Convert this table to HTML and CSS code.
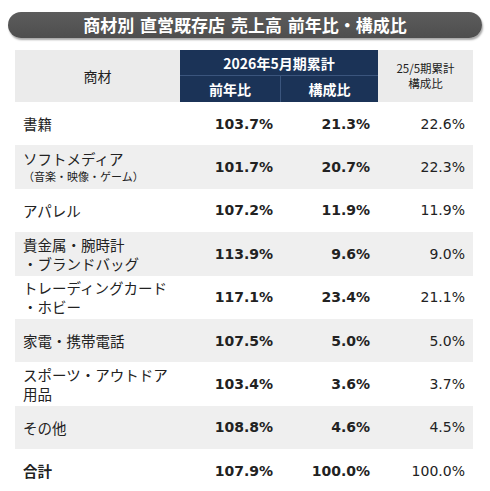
FILE: index.html
```html
<!DOCTYPE html>
<html lang="ja">
<head>
    <meta charset="UTF-8">
    <meta name="viewport" content="width=device-width, initial-scale=1.0">
    <title>商材別 直営既存店 売上高</title>
    <link rel="stylesheet" href="styles.css">
</head>
<body>
    <div class="page">
        <div class="title-bar">商材別 直営既存店 売上高 前年比・構成比</div>

        <div class="sheet">
            <!-- ヘッダー -->
            <div class="head">
                <div class="h-item">商材</div>
                <div class="h-period">2026年5月期累計</div>
                <div class="h-yoy">前年比</div>
                <div class="h-share">構成比</div>
                <div class="h-prev"><span>25/5期累計</span><span>構成比</span></div>
            </div>

            <div class="row">
                <div class="item">書籍</div>
                <div class="num bold">103.7%</div>
                <div class="num bold">21.3%</div>
                <div class="num">22.6%</div>
            </div>
            <div class="row shade">
                <div class="item with-note"><span>ソフトメディア</span><span class="note">（音楽・映像・ゲーム）</span></div>
                <div class="num bold">101.7%</div>
                <div class="num bold">20.7%</div>
                <div class="num">22.3%</div>
            </div>
            <div class="row">
                <div class="item">アパレル</div>
                <div class="num bold">107.2%</div>
                <div class="num bold">11.9%</div>
                <div class="num">11.9%</div>
            </div>
            <div class="row shade">
                <div class="item">貴金属・腕時計<br>・ブランドバッグ</div>
                <div class="num bold">113.9%</div>
                <div class="num bold">9.6%</div>
                <div class="num">9.0%</div>
            </div>
            <div class="row">
                <div class="item">トレーディングカード<br>・ホビー</div>
                <div class="num bold">117.1%</div>
                <div class="num bold">23.4%</div>
                <div class="num">21.1%</div>
            </div>
            <div class="row shade">
                <div class="item">家電・携帯電話</div>
                <div class="num bold">107.5%</div>
                <div class="num bold">5.0%</div>
                <div class="num">5.0%</div>
            </div>
            <div class="row">
                <div class="item">スポーツ・アウトドア<br>用品</div>
                <div class="num bold">103.4%</div>
                <div class="num bold">3.6%</div>
                <div class="num">3.7%</div>
            </div>
            <div class="row shade">
                <div class="item">その他</div>
                <div class="num bold">108.8%</div>
                <div class="num bold">4.6%</div>
                <div class="num">4.5%</div>
            </div>
            <div class="row total">
                <div class="item">合計</div>
                <div class="num bold">107.9%</div>
                <div class="num bold">100.0%</div>
                <div class="num">100.0%</div>
            </div>
        </div>
    </div>
</body>
</html>
```

FILE: styles.css
```css
body {
    margin: 0;
    background: #ffffff;
    color: #222222;
    font-family: "Noto Sans CJK JP", "DejaVu Sans", sans-serif;
}
.page {
    padding-top: 12px;
}
.title-bar {
    margin: 0 8px;
    height: 26px;
    line-height: 26px;
    border-radius: 13px;
    background: linear-gradient(#5c5c5c, #4e4e4e);
    box-shadow: 1px 2px 2px rgba(0, 0, 0, 0.35);
    color: #ffffff;
    font-size: 17px;
    font-weight: bold;
    text-align: center;
    word-spacing: 2px;
}
.sheet {
    margin: 12px 17px 0 15px;
}
.head, .row {
    display: grid;
    grid-template-columns: 165px 101px 97px 95px;
}
.head {
    grid-template-rows: 26px 26px;
    background: #ebebeb;
}
.h-item {
    grid-row: 1 / 3;
    display: flex;
    align-items: center;
    justify-content: center;
    font-size: 14px;
}
.h-period, .h-yoy, .h-share {
    background: #1b3357;
    color: #ffffff;
    font-weight: bold;
    font-size: 14px;
    display: flex;
    align-items: center;
    justify-content: center;
}
.h-period {
    grid-column: 2 / 4;
    border-bottom: 1px solid #3b557d;
}
.h-yoy {
    border-right: 1px solid #3b557d;
}
.h-prev {
    grid-column: 4;
    grid-row: 1 / 3;
    display: flex;
    flex-direction: column;
    align-items: center;
    justify-content: center;
    font-size: 11.5px;
    line-height: 15px;
}
.row {
    height: 43.4px;
}
.shade {
    background: #efefef;
}
.item {
    display: flex;
    flex-direction: column;
    justify-content: center;
    padding-left: 8px;
    font-size: 14.5px;
    line-height: 19px;
}
.note {
    font-size: 11px;
    line-height: 17px;
}
.num {
    display: flex;
    align-items: center;
    justify-content: flex-end;
    padding-right: 8px;
    font-family: "DejaVu Sans", sans-serif;
    font-size: 14px;
}
.bold {
    font-weight: bold;
}
.total .item {
    font-weight: bold;
}
```
